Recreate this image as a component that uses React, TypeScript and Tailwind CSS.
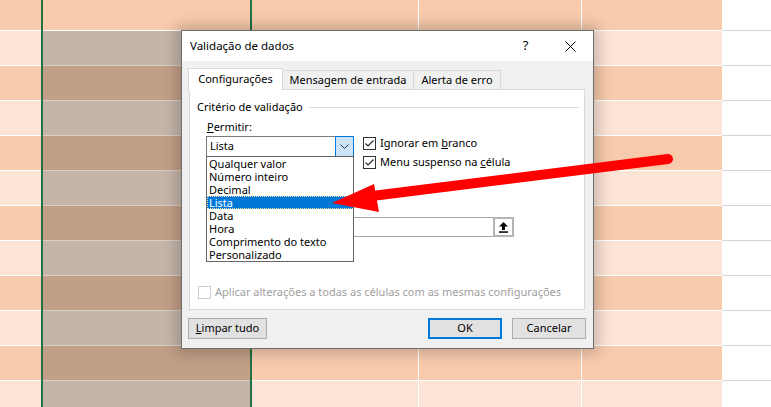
import React from 'react';

const ROWS = 12;

function cellClass(row: number, selected: boolean) {
  const h = row === 0 ? 'h-[31px]' : 'h-[35px]';
  if (selected && row > 0) {
    return `${h} shrink-0 border-b border-[#d8cfc9] ${row % 2 ? 'bg-[#c5b5a9]' : 'bg-[#c29f87]'}`;
  }
  return `${h} shrink-0 border-b border-white ${row % 2 ? 'bg-[#fce4d6]' : 'bg-[#f8cbad]'}`;
}

function SheetColumn({ className, selected = false }: { className: string; selected?: boolean }) {
  return (
    <div className={`flex flex-col shrink-0 ${className}`}>
      {Array.from({ length: ROWS }, (_, i) => (
        <div key={i} className={cellClass(i, selected)} />
      ))}
    </div>
  );
}

function Checkbox({ checked = false, disabled = false }: { checked?: boolean; disabled?: boolean }) {
  return (
    <div
      className={`w-[13px] h-[13px] shrink-0 bg-white border flex items-center justify-center ${
        disabled ? 'border-[#cccccc]' : 'border-[#333333]'
      }`}
    >
      {checked && (
        <svg width="11" height="11" viewBox="0 0 11 11">
          <polyline points="1.5,5.5 4,8 9.5,2.5" fill="none" stroke="#222" strokeWidth="1.1" />
        </svg>
      )}
    </div>
  );
}

const options = [
  'Qualquer valor',
  'Número inteiro',
  'Decimal',
  'Lista',
  'Data',
  'Hora',
  'Comprimento do texto',
  'Personalizado',
];

function Dialog() {
  return (
    <div className="absolute left-[181px] top-[30px] w-[413px] h-[319px] border border-[#6e6e6e] bg-[#f0f0f0] flex flex-col shadow-[0_0_14px_4px_rgba(0,0,0,0.22)] text-[11px] text-black font-['Noto_Sans','Liberation_Sans',sans-serif]">
      {/* Title bar */}
      <div className="h-[30px] shrink-0 bg-white flex items-center">
        <span className="pl-[8px] flex-1 text-[11.5px]">Validação de dados</span>
        <div className="w-[45px] h-full flex items-center justify-center text-[13px]">?</div>
        <div className="w-[45px] h-full flex items-center justify-center">
          <svg width="11" height="11" viewBox="0 0 11 11">
            <path d="M0.5 0.5 L10.5 10.5 M10.5 0.5 L0.5 10.5" stroke="#000" strokeWidth="1" />
          </svg>
        </div>
      </div>

      {/* Body */}
      <div className="flex-1 flex flex-col pt-[7px] pl-[7px] pr-[8px] pb-[9px]">
        {/* Tabs */}
        <div className="flex items-end h-[21px] shrink-0">
          <div className="relative z-10 -ml-px -mb-px h-[22px] w-[95px] bg-white border-t border-x border-[#d9d9d9] flex items-center justify-center">
            Configurações
          </div>
          <div className="h-[19px] w-[131px] border-t border-r border-[#d9d9d9] flex items-center justify-center">
            Mensagem de entrada
          </div>
          <div className="h-[19px] w-[87px] border-t border-r border-[#d9d9d9] flex items-center justify-center">
            Alerta de erro
          </div>
        </div>

        {/* Tab panel */}
        <div className="relative h-[221px] shrink-0 bg-white border border-[#d9d9d9] flex flex-col">
          <div className="flex items-center h-[16px] mt-[9px] pl-[7px] pr-[5px]">
            <span>Critério de validação</span>
            <div className="flex-1 h-px bg-[#dcdcdc] ml-[6px]" />
          </div>
          <div className="h-[16px] mt-[4px] pl-[17px] flex items-center">
            <span className="underline">P</span>ermitir:
          </div>
          <div className="mt-[1px] pl-[16px] flex">
            <div className="flex h-[21px]">
              <div className="w-[129px] h-full border-y border-l border-[#7a7a7a] flex items-center pl-[3px]">Lista</div>
              <div className="w-[19px] h-full border border-[#0078d7] bg-[#cce4f7] flex items-center justify-center">
                <svg width="9" height="5" viewBox="0 0 9 5">
                  <polyline points="0.5,0.5 4.5,4.5 8.5,0.5" fill="none" stroke="#333" strokeWidth="1" />
                </svg>
              </div>
            </div>
            <div className="ml-[9px] flex flex-col">
              <div className="h-[14px] flex items-center gap-[4px]">
                <Checkbox checked />
                <span>
                  Ignorar em <span className="underline">b</span>ranco
                </span>
              </div>
              <div className="h-[14px] mt-[5px] flex items-center gap-[4px]">
                <Checkbox checked />
                <span>
                  Menu suspenso na <span className="underline">c</span>élula
                </span>
              </div>
            </div>
          </div>

          {/* Fonte input, mostly hidden by the open list */}
          <div className="mt-[48px] ml-[16px] w-[308px] h-[20px] border border-[#a8a8a8] flex justify-end">
            <div className="w-[21px] h-[20px] -mt-px -mr-px border-2 border-[#b4b4b4] bg-white flex items-center justify-center">
              <svg width="9" height="11" viewBox="0 0 9 11">
                <polygon points="4.5,0 9,4.5 6,4.5 6,8 3,8 3,4.5 0,4.5" fill="#000" />
                <rect x="0" y="9.3" width="9" height="1.5" fill="#000" />
              </svg>
            </div>
          </div>

          <div className="mt-auto mb-[10px] pl-[8px] h-[14px] flex items-center gap-[4px] text-[#a0a0a0] whitespace-nowrap">
            <Checkbox disabled />
            <span>Aplicar alterações a todas as células com as mesmas configurações</span>
          </div>

          {/* Open dropdown list */}
          <div className="absolute left-[16px] top-[66px] w-[148px] h-[106px] border border-[#646464] bg-white z-20 flex flex-col">
            {options.map((o) => (
              <div
                key={o}
                className={
                  o === 'Lista'
                    ? 'h-[13px] leading-[13px] pl-[2px] bg-[#0078d7] text-white outline-1 outline-dotted outline-[#f3e3b0] -outline-offset-1'
                    : 'h-[13px] leading-[13px] pl-[2px]'
                }
              >
                {o}
              </div>
            ))}
          </div>
        </div>

        {/* Buttons */}
        <div className="mt-[8px] flex h-[21px] shrink-0">
          <div className="-ml-px w-[79px] h-full bg-[#e1e1e1] border border-[#adadad] flex items-center justify-center">
            <span>
              <span className="underline">L</span>impar tudo
            </span>
          </div>
          <div className="flex-1" />
          <div className="w-[74px] h-full bg-[#e1e1e1] border-2 border-[#0078d7] flex items-center justify-center">OK</div>
          <div className="ml-[10px] -mr-px w-[74px] h-full bg-[#e1e1e1] border border-[#adadad] flex items-center justify-center">
            Cancelar
          </div>
        </div>
      </div>
    </div>
  );
}

function Arrow() {
  return (
    <svg className="absolute left-0 top-0 z-30 pointer-events-none" width="771" height="407" viewBox="0 0 771 407">
      <line x1="372" y1="196" x2="668" y2="159" stroke="#ff0000" strokeWidth="10" strokeLinecap="round" />
      <polygon points="332,203 374,184 379,212" fill="#ff0000" />
    </svg>
  );
}

export default function App() {
  return (
    <div className="relative w-[771px] h-[407px] overflow-hidden bg-white">
      <div className="flex h-full">
        <SheetColumn className="w-[43px] border-r-2 border-[#217346]" />
        <SheetColumn className="w-[209px] border-r-2 border-[#217346]" selected />
        <SheetColumn className="w-[167px] border-r border-white" />
        <SheetColumn className="w-[163px] border-r border-white" />
        <SheetColumn className="w-[140px]" />
        <div className="flex-1 flex flex-col">
          {Array.from({ length: ROWS }, (_, i) => (
            <div key={i} className={`${i === 0 ? 'h-[31px]' : 'h-[35px]'} shrink-0 border-b border-[#d4d4d4]`} />
          ))}
        </div>
      </div>
      <Dialog />
      <Arrow />
    </div>
  );
}
